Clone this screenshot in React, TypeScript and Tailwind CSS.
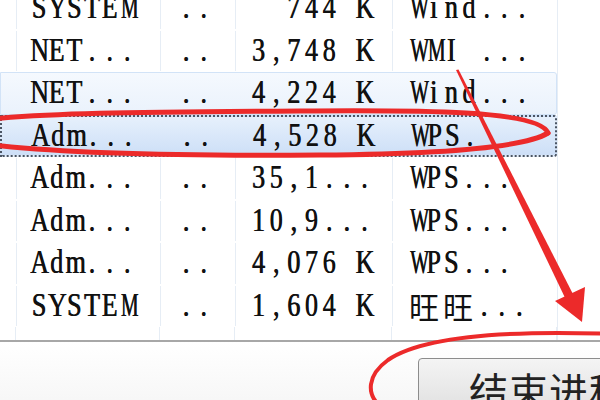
import React from 'react';

type Row = {
  user: string;
  cpu: string;
  mem: string;
  desc: string;
  state?: 'hover' | 'selected';
};

const serif =
  "font-['Liberation_Serif',serif] text-[26px] text-[#111] [text-shadow:0.6px_0_0_#111]";

// SimSun-like fixed pitch text: every char sits in its own cell, stretched tall
function T({ s }: { s: string }) {
  return (
    <span className="inline-flex shrink-0 items-center scale-y-[1.28] leading-none">
      {s.split('').map((c, i) => {
        if (/[\u4e00-\u9fff]/.test(c)) {
          return (
            <span
              key={i}
              className="inline-block w-[34px] text-center font-['Noto_Sans_CJK_SC',sans-serif] text-[30px] scale-y-[0.8] [text-shadow:none]"
            >
              {c}
            </span>
          );
        }
        return (
          <span key={i} className="inline-block w-[17.65px] text-center">
            {c === 'W' || c === 'M' ? (
              <span className="inline-block scale-x-[0.76]">{c}</span>
            ) : c === ' ' ? (
              '\u00a0'
            ) : (
              c
            )}
          </span>
        );
      })}
    </span>
  );
}

const rows: Row[] = [
  { user: 'SYSTEM', cpu: '..', mem: '744 K', desc: 'Wind...' },
  { user: 'NET...', cpu: '..', mem: '3,748 K', desc: 'WMI ...' },
  { user: 'NET...', cpu: '..', mem: '4,224 K', desc: 'Wind...', state: 'hover' },
  { user: 'Adm...', cpu: '..', mem: '4,528 K', desc: 'WPS.', state: 'selected' },
  { user: 'Adm...', cpu: '..', mem: '35,1...', desc: 'WPS...' },
  { user: 'Adm...', cpu: '..', mem: '10,9...', desc: 'WPS...' },
  { user: 'Adm...', cpu: '..', mem: '4,076 K', desc: 'WPS...' },
  { user: 'SYSTEM', cpu: '..', mem: '1,604 K', desc: '旺旺...' },
];

function Cells({ row, lines }: { row?: Row; lines: boolean }) {
  const line = lines ? 'border-r border-[#e6edf5]' : 'border-r border-transparent';
  return (
    <>
      <div className={`w-[16px] shrink-0 h-full ${line}`} />
      <div className={`w-[144px] shrink-0 h-full flex items-center pl-[13px] ${line}`}>
        {row && <T s={row.user} />}
      </div>
      <div className={`w-[75px] shrink-0 h-full flex items-center pl-[16px] ${line}`}>
        {row && <T s={row.cpu} />}
      </div>
      <div className={`w-[157px] shrink-0 h-full flex items-center justify-end pr-[19px] ${line}`}>
        {row && <T s={row.mem} />}
      </div>
      <div className={`w-[165px] shrink-0 h-full flex items-center pl-[14px] ${line}`}>
        {row && <T s={row.desc} />}
      </div>
    </>
  );
}

function ListRow({ row }: { row: Row }) {
  let box = 'border border-transparent';
  if (row.state === 'hover') {
    box = 'bg-gradient-to-b from-[#f5f9fe] to-[#eaf2fc] border border-[#d2e3f7] rounded-r-[3px]';
  }
  if (row.state === 'selected') {
    box =
      'bg-gradient-to-b from-[#e6f0fc] to-[#cddff7] border-2 border-dotted border-[#4b5563] rounded-r-[3px]';
  }
  return (
    <div className="h-[42.5px] flex shrink-0">
      <div className={`w-[557px] shrink-0 h-full flex box-border ${box}`}>
        <Cells row={row} lines={!row.state} />
      </div>
      <div className="flex-1 h-full border-l border-[#e6edf5]" />
    </div>
  );
}

export default function App() {
  return (
    <div className={`relative w-[600px] h-[400px] overflow-hidden bg-white ${serif}`}>
      {/* process list */}
      <div className="h-[342px] flex flex-col border-b-2 border-[#a7a7a7] overflow-hidden">
        <div className="mt-[-13px] flex flex-col">
          {rows.map((r, i) => (
            <ListRow key={i} row={r} />
          ))}
        </div>
        <div className="flex-1 flex">
          <div className="w-[557px] shrink-0 h-full flex">
            <Cells lines />
          </div>
          <div className="flex-1 h-full border-l border-[#e6edf5]" />
        </div>
      </div>

      {/* bottom bar with end process button */}
      <div className="flex pt-[16px] pl-[418px] bg-gradient-to-b from-white to-[#f7f7f7] h-[58px]">
        <button className="w-[240px] h-[60px] shrink-0 rounded-[4px] border border-[#8c8c8c] bg-gradient-to-b from-[#f4f4f4] to-[#dedede] text-left pl-[50px] pt-[2px] font-['Noto_Sans_CJK_SC',sans-serif] text-[39px] leading-[50px] text-[#222] tracking-[1px] [text-shadow:none]">
          结束进程
        </button>
      </div>

      {/* red annotations */}
      <svg className="absolute inset-0 pointer-events-none" width="600" height="400" viewBox="0 0 600 400">
        <g fill="none" stroke="#ec2a2a" strokeLinecap="round">
          <path
            strokeWidth="5"
            d="M 548 133 C 540 110 420 110 300 111 C 160 112 50 112 -30 121"
          />
          <path
            strokeWidth="5"
            d="M -30 142 C 50 154 200 156 320 155 C 450 154 525 147 548 133"
          />
          <path strokeWidth="4" d="M 612 334 C 500 330 420 338 388 360 C 366 376 368 394 378 404" />
        </g>
        <polygon fill="#ec2a2a" points="456,70 458.5,69.5 576,300 568,304" />
        <polygon fill="#ec2a2a" points="555,301 585,287 582,322" />
      </svg>
    </div>
  );
}
